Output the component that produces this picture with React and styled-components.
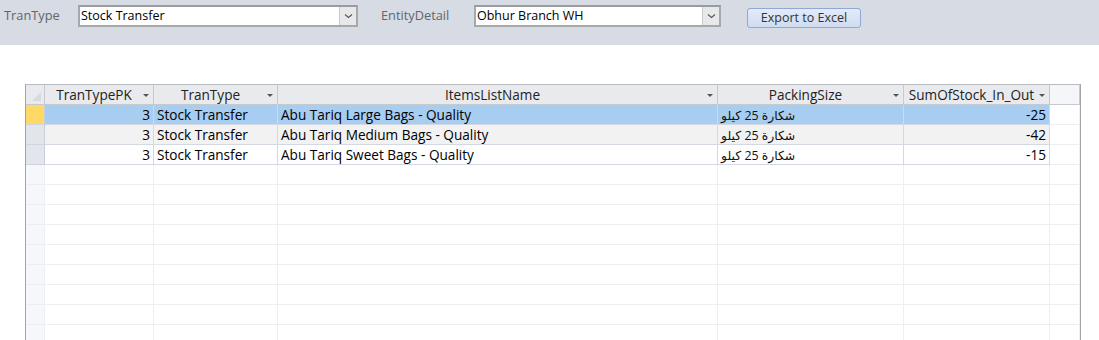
import React from 'react';
import styled, { createGlobalStyle } from 'styled-components';

const GlobalStyle = createGlobalStyle`
  html, body {
    margin: 0;
    padding: 0;
    background: #ffffff;
    overflow: hidden;
  }
  body {
    font-family: "Open Sans", "DejaVu Sans", sans-serif;
    font-size: 12.5px;
    color: #000;
  }
`;

const COLS = '19px 109px 124px 440px 186px 146px 1fr';

const columns = [
    {name: 'TranTypePK', align: 'right'},
    {name: 'TranType', align: 'left'},
    {name: 'ItemsListName', align: 'left'},
    {name: 'PackingSize', align: 'left'},
    {name: 'SumOfStock_In_Out', align: 'right'},
];

const rows = [
    [3, 'Stock Transfer', 'Abu Tariq Large Bags - Quality', 'شكارة 25 كيلو', -25],
    [3, 'Stock Transfer', 'Abu Tariq Medium Bags - Quality', 'شكارة 25 كيلو', -42],
    [3, 'Stock Transfer', 'Abu Tariq Sweet Bags - Quality', 'شكارة 25 كيلو', -15],
];

const TopBar = styled.div`
  height: 45px;
  background: #d6dbe4;
  display: flex;
  align-items: flex-start;
  padding-top: 5px;
  box-sizing: border-box;
`;

const Label = styled.span`
  width: ${p => p.$width}px;
  margin-left: ${p => p.$offset}px;
  line-height: 20px;
  font-size: 12.8px;
  color: #63666b;
  white-space: nowrap;
`;

const Combo = styled.div`
  width: ${p => p.$width}px;
  height: 22px;
  box-sizing: border-box;
  border: 2px solid #a7a8aa;
  border-top-color: #9a9b9d;
  background: #fff;
  display: flex;
`;

const ComboText = styled.span`
  flex: 1;
  padding-left: 1px;
  line-height: 18px;
  white-space: nowrap;
`;

const ComboArrow = styled.div`
  width: 16px;
  background: #e7e8ea;
  border-left: 1px solid #c9cacc;
  display: flex;
  align-items: center;
  justify-content: center;
`;

const ExcelButton = styled.button`
  margin-left: 26px;
  margin-top: 3px;
  width: 114px;
  height: 20px;
  padding: 0;
  border: 1px solid #8fa8d6;
  border-radius: 3px;
  background: linear-gradient(#e3ebf8, #cfdcf2);
  font: inherit;
  color: #333;
  line-height: 16px;
`;

const Sheet = styled.div`
  margin: 39px 0 0 25px;
  width: 1056px;
  height: 256px;
  overflow: hidden;
  box-sizing: border-box;
  border-left: 1px solid #a3a5a8;
  border-right: 1px solid #a3a5a8;
  border-top: 1px solid #b9bcc1;
  font-size: 13.6px;
`;

const Row = styled.div`
  display: grid;
  grid-template-columns: ${COLS};
  height: 20px;
`;

const HeadCell = styled.div`
  box-sizing: border-box;
  border-right: 1px solid #c6c9ce;
  border-bottom: 1px solid #c6c9ce;
  background: ${p => (p.$blank ? '#f4f6fa' : '#e8eaee')};
  display: flex;
  align-items: center;
  color: #222;
  padding-right: 4px;
`;

const HeadText = styled.span`
  flex: 1;
  text-align: center;
  white-space: nowrap;
`;

const DropTri = styled.span`
  width: 0;
  height: 0;
  border-left: 3px solid transparent;
  border-right: 3px solid transparent;
  border-top: 3px solid #555;
  margin-top: 1px;
`;

const Corner = styled.div`
  box-sizing: border-box;
  background: #e8eaee;
  border-right: 1px solid #c6c9ce;
  border-bottom: 1px solid #c6c9ce;
  display: flex;
  align-items: flex-end;
  justify-content: flex-end;
  padding: 0 3px 3px 0;
`;

const Selector = styled.div`
  box-sizing: border-box;
  background: ${p => (p.$active ? '#ffd965' : p.$empty ? '#f6f7fd' : '#e2e5eb')};
  border-right: 1px solid ${p => (p.$empty ? '#eceef3' : '#c9ced8')};
  border-bottom: 1px solid ${p => (p.$empty ? '#eceef3' : '#cfd4de')};
`;

const Cell = styled.div`
  box-sizing: border-box;
  background: ${p => p.$bg};
  border-right: 1px solid ${p => (p.$empty ? '#eeeff3' : '#d3d8e2')};
  border-bottom: 1px solid ${p => (p.$empty ? '#eeeff3' : '#d3d8e2')};
  text-align: ${p => p.$align || 'left'};
  padding: 0 3px;
  line-height: 19px;
  white-space: nowrap;
  overflow: hidden;
`;

const Arabic = styled.span`
  font-size: 12.4px;
  font-weight: normal;
  color: #111;
`;

const Chevron = () => (
    <svg width="9" height="6" viewBox="0 0 9 6">
        <path d="M1 1.5 L4.5 4.5 L8 1.5" fill="none" stroke="#555" strokeWidth="1.1"/>
    </svg>
);

const App = () => {
    const empty = Array.from({length: 9});
    return <>
        <GlobalStyle/>
        <TopBar>
            <Label $offset={4} $width={74}>TranType</Label>
            <Combo $width={280}>
                <ComboText>Stock Transfer</ComboText>
                <ComboArrow><Chevron/></ComboArrow>
            </Combo>
            <Label $offset={23} $width={93}>EntityDetail</Label>
            <Combo $width={247}>
                <ComboText>Obhur Branch WH</ComboText>
                <ComboArrow><Chevron/></ComboArrow>
            </Combo>
            <ExcelButton>Export to Excel</ExcelButton>
        </TopBar>

        <Sheet>
            <Row>
                <Corner>
                    <svg width="9" height="9" viewBox="0 0 9 9">
                        <path d="M9 0 L9 9 L0 9 Z" fill="#d7dadf"/>
                    </svg>
                </Corner>
                {columns.map(col => (
                    <HeadCell key={col.name}>
                        <HeadText>{col.name}</HeadText>
                        <DropTri/>
                    </HeadCell>
                ))}
                <HeadCell $blank/>
            </Row>

            {rows.map((r, i) => {
                const bg = i === 0 ? '#a7cdf0' : i === 1 ? '#f2f2f2' : '#ffffff';
                return <Row key={i}>
                    <Selector $active={i === 0}/>
                    {r.map((v, j) => (
                        <Cell key={j} $bg={bg} $align={columns[j].align}>
                            {j === 3 ? <Arabic>{v}</Arabic> : v}
                        </Cell>
                    ))}
                    <Cell $bg="#fff" $empty/>
                </Row>
            })}

            {empty.map((_, i) => (
                <Row key={'e' + i}>
                    <Selector $empty/>
                    {columns.map(col => <Cell key={col.name} $bg="#fff" $empty/>)}
                    <Cell $bg="#fff" $empty/>
                </Row>
            ))}
        </Sheet>
    </>
}

export default App;
